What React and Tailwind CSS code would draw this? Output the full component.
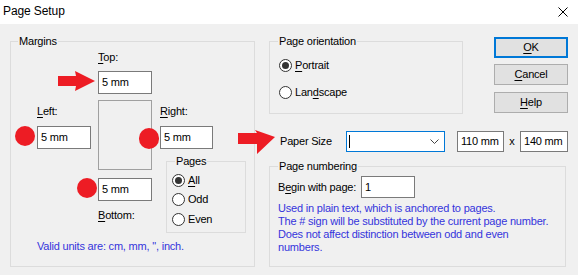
import React from "react";

const U = ({ children }) => <span className="underline underline-offset-[2px]">{children}</span>;

function Input({ value, w = "w-[54px]", h = "h-[23px]", extra = "" }) {
  return (
    <div className={`${w} ${h} ${extra} bg-white border border-[#7a7a7a] flex items-center pl-[3px] text-black`}>
      {value}
    </div>
  );
}

function Radio({ checked }) {
  return (
    <div className="w-[13px] h-[13px] rounded-full border border-[#333333] bg-white flex items-center justify-center shrink-0">
      {checked && <div className="w-[7px] h-[7px] rounded-full bg-[#333333]" />}
    </div>
  );
}

function Button({ children, primary }) {
  return (
    <div
      className={`w-[74px] h-[21px] bg-[#e1e1e1] flex items-center justify-center text-black ${
        primary ? "border-2 border-[#0078d7]" : "border border-[#adadad]"
      }`}
    >
      {children}
    </div>
  );
}

export default function App() {
  return (
    <div className="relative w-[578px] h-[275px] overflow-hidden bg-[#f0f0f0] font-['Liberation_Sans',Arial,sans-serif] text-[11px] leading-[13px] tracking-[-0.2px] text-black">
      {/* Title bar */}
      <div className="h-[24px] bg-white flex items-center justify-between pl-[3px] pr-[10px] pb-[1px]">
        <span className="text-[12px] tracking-[-0.1px]">Page Setup</span>
        <svg width="10" height="10" viewBox="0 0 10 10">
          <path d="M0.5 0.5 L9.5 9.5 M9.5 0.5 L0.5 9.5" stroke="#000" strokeWidth="1" />
        </svg>
      </div>

      {/* Body */}
      <div className="flex pl-[10px] pt-[11px]">
        {/* Margins */}
        <fieldset className="w-[245px] h-[232px] border border-[#dcdcdc] m-0 p-0 min-w-0">
          <legend className="ml-[7px] px-[1px] leading-[13px]">Margins</legend>
          <div className="pl-[26px]">
            <div className="flex">
              {/* Left column */}
              <div className="w-[54px] pt-[57px]">
                <div className="h-[13px]">
                  <U>L</U>eft:
                </div>
                <Input value="5 mm" extra="mt-[8px]" />
              </div>
              {/* Center column */}
              <div className="w-[54px] ml-[7px] pt-[3px]">
                <div className="h-[13px]">
                  <U>T</U>op:
                </div>
                <Input value="5 mm" extra="mt-[7px]" />
                <div className="mt-[6px] h-[70px] border border-[#a0a0a0]" />
                <Input value="5 mm" extra="mt-[8px]" />
                <div className="h-[13px] mt-[8px]">
                  <U>B</U>ottom:
                </div>
              </div>
              {/* Right column */}
              <div className="ml-[8px] pt-[57px]">
                <div className="h-[13px]">
                  <U>R</U>ight:
                </div>
                <Input value="5 mm" w="w-[53px]" extra="mt-[8px]" />
                <fieldset className="ml-[6px] mt-[6px] w-[80px] h-[78px] border border-[#dcdcdc] m-0 p-0 min-w-0">
                  <legend className="ml-[8px] px-[1px] leading-[13px]">Pages</legend>
                  <div className="pt-[2px] pl-[5px]">
                    <div className="h-[20px] flex items-center gap-[3px]">
                      <Radio checked />
                      <span>
                        <U>A</U>ll
                      </span>
                    </div>
                    <div className="h-[19px] flex items-center gap-[3px]">
                      <Radio />
                      <span>Odd</span>
                    </div>
                    <div className="h-[20px] flex items-center gap-[3px]">
                      <Radio />
                      <span>Even</span>
                    </div>
                  </div>
                </fieldset>
              </div>
            </div>
            <div className="mt-[7px] text-[#3434dc]">Valid units are: cm, mm, &quot;, inch.</div>
          </div>
        </fieldset>

        {/* Right side */}
        <div className="ml-[14px]">
          <div className="flex">
            <fieldset className="w-[194px] h-[79px] border border-[#dcdcdc] m-0 p-0 min-w-0">
              <legend className="ml-[8px] px-[1px] leading-[13px]">Page orientation</legend>
              <div className="pl-[9px]">
                <div className="mt-[7px] h-[20px] flex items-center gap-[3px]">
                  <Radio checked />
                  <span>
                    <U>P</U>ortrait
                  </span>
                </div>
                <div className="mt-[7px] h-[20px] flex items-center gap-[3px]">
                  <Radio />
                  <span>
                    Lan<U>d</U>scape
                  </span>
                </div>
              </div>
            </fieldset>
            <div className="ml-[31px] pt-[2px] flex flex-col">
              <Button primary>
                <U>O</U>K
              </Button>
              <div className="mt-[6px]">
                <Button>
                  <U>C</U>ancel
                </Button>
              </div>
              <div className="mt-[7px]">
                <Button>
                  <U>H</U>elp
                </Button>
              </div>
            </div>
          </div>

          {/* Paper size row */}
          <div className="mt-[17px] h-[21px] flex items-center pl-[11px]">
            <span className="w-[66px]">Paper Size</span>
            <div className="w-[99px] h-[21px] bg-white border border-[#0078d7] flex items-center justify-between pl-[2px] pr-[5px]">
              <div className="w-[1px] h-[13px] bg-black" />
              <svg width="9" height="5" viewBox="0 0 9 5">
                <path d="M0.5 0.5 L4.5 4.5 L8.5 0.5" stroke="#444" strokeWidth="1" fill="none" />
              </svg>
            </div>
            <Input value="110 mm" w="w-[47px]" h="h-[21px]" extra="ml-[12px]" />
            <span className="w-[16px] text-center">x</span>
            <Input value="140 mm" w="w-[48px]" h="h-[21px]" />
          </div>

          {/* Page numbering */}
          <fieldset className="mt-[8px] w-[297px] h-[107px] border border-[#dcdcdc] m-0 p-0 min-w-0">
            <legend className="ml-[8px] px-[1px] leading-[13px]">Page numbering</legend>
            <div className="pl-[8px]">
              <div className="mt-[3px] h-[22px] flex items-center">
                <span className="w-[83px]">
                  B<U>e</U>gin with page:
                </span>
                <Input value="1" h="h-[22px]" />
              </div>
              <div className="mt-[4px] text-[#3434dc]">
                <div>Used in plain text, which is anchored to pages.</div>
                <div>The # sign will be substituted by the current page number.</div>
                <div>Does not affect distinction between odd and even</div>
                <div>numbers.</div>
              </div>
            </div>
          </fieldset>
        </div>
      </div>

      {/* Red annotations */}
      <svg className="absolute left-[58px] top-[71px]" width="38" height="21" viewBox="0 0 38 21">
        <polygon points="0,5 18,5 17,0 37,10 17,20 18,15 0,15" fill="#ed1c24" />
      </svg>
      <svg className="absolute left-[238px] top-[130px]" width="38" height="25" viewBox="0 0 38 25">
        <polygon points="0,3 19,3 17,0 37,7 19,24 19,14 0,14" fill="#ed1c24" />
      </svg>
      <div className="absolute left-[15px] top-[126px] w-[20px] h-[20px] rounded-full bg-[#ed1c24]" />
      <div className="absolute left-[139px] top-[128px] w-[20px] h-[21px] rounded-full bg-[#ed1c24]" />
      <div className="absolute left-[77px] top-[178px] w-[20px] h-[20px] rounded-full bg-[#ed1c24]" />
    </div>
  );
}
